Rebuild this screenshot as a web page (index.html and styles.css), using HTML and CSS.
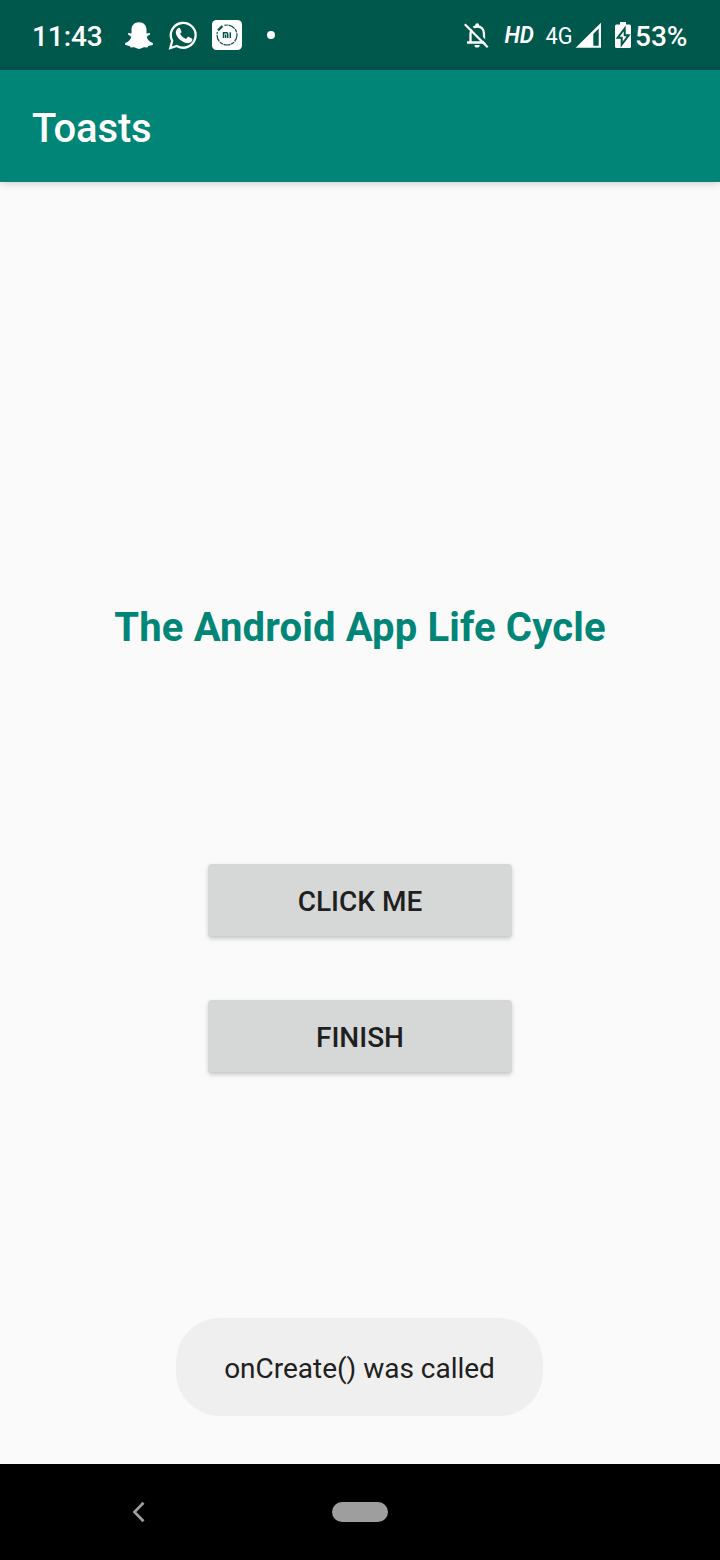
FILE: index.html
```html
<!DOCTYPE html>
<html lang="en">
<head>
<meta charset="utf-8">
<title>Toasts</title>
<link rel="stylesheet" href="styles.css">
</head>
<body>
<div class="screen">
  <header class="status">
    <span class="clock">11:43</span>
    <svg class="notifications" width="160" height="40" viewBox="120 15 160 40">
      <path fill="#fff" d="M139 22.300c-4.900 0-7.500 3.200-7.500 7.600v3.600l-3.200-.6-.5 1.400 3.500 2.400c-.6 2.800-2.700 5-6.200 6.400l.2 2 4.300 1 1 1.400 3.200-.2c1.800 0 2.500 1.600 5.200 1.600s3.400-1.600 5.200-1.600l3.200.2 1-1.400 4.300-1 .2-2c-3.500-1.400-5.600-3.600-6.200-6.400l3.500-2.400-.5-1.400-3.200.6v-3.600c0-4.400-2.600-7.600-7.500-7.600z"/>
      <path fill="none" stroke="#fff" stroke-width="2.300" d="M170.300 48l1.900-7a12.400 12.400 0 1 1 4.600 4.900z"/>
      <path fill="#fff" d="M178.300 27.900c.8-.5 1.500-.3 1.900.5l1.200 3c.2.700-.2 1.200-1.300 2.400 1.400 2.500 3.300 4.200 5.900 5.300l1.600-2c.4-.5.800-.4 1.400-.2l2.900 1.500c.6.400.5 1 .2 2.100-.8 2.200-3.500 3-5.700 2.500-5.300-1.300-9.500-5.200-10.500-9.500-.5-2.200.6-4.500 2.400-5.600z"/>
      <rect x="212" y="20" width="30" height="30" rx="4.500" fill="#fff"/>
      <circle cx="227" cy="35" r="10" fill="none" stroke="#00574b" stroke-width="1.200" stroke-dasharray="7 .8 3.500 .8"/>
      <path d="M216.500 31l6.500-6.500" stroke="#fff" stroke-width="5"/>
      <path d="M218 30.400l4.500-4.400" stroke="#00574b" stroke-width="2.200"/>
      <path d="M223.500 38v-5.200h3.200q1 0 1 1V38M225.600 34.500V38M230.300 32.200V38" fill="none" stroke="#00574b" stroke-width="1.500"/>
      <circle cx="271" cy="35" r="4" fill="#fff"/>
    </svg>
    <svg class="system" width="172" height="40" viewBox="460 15 172 40">
      <path d="M470.500 42.500V34c0-5 3-7.500 6.800-7.500s6.700 2.500 6.700 7.500v8.500M467 42.500h20" fill="none" stroke="#fff" stroke-width="2.300"/>
      <path d="M475.200 27v-1.700a2 2 0 0 1 4 0V27zM474.500 45h5.200a2.600 2.600 0 0 1-5.200 0z" fill="#fff"/>
      <path d="M466.500 22.300l23 23" stroke="#00574b" stroke-width="2.500"/>
      <path d="M464.800 24.300l22.900 22.900" stroke="#fff" stroke-width="2.300"/>
      <text class="hd" x="504.500" y="43.300" textLength="29.500" lengthAdjust="spacingAndGlyphs">HD</text>
      <text class="network" x="545.500" y="44" textLength="27" lengthAdjust="spacingAndGlyphs">4G</text>
      <path fill="#fff" fill-rule="evenodd" d="M575.700 47.800L601 22.800v25zM593.300 34v11.700h5.400V28.500z"/>
      <path fill="#fff" d="M620 22h6v2.500h3.500q1.500 0 1.500 1.500v20.500q0 1.500-1.500 1.500h-13q-1.500 0-1.500-1.500V26q0-1.500 1.500-1.500h3.500z"/>
      <path fill="#fff" stroke="#00574b" stroke-width="2" d="M624.700 28.500l-7 9.200h4v6.800l7-9.300h-4z"/>
    </svg>
    <span class="percent">53%</span>
  </header>
  <div class="toolbar">Toasts</div>
  <main class="content">
    <h1 class="title">The Android App Life Cycle</h1>
    <button class="button">CLICK ME</button>
    <button class="button">FINISH</button>
    <div class="toast">onCreate() was called</div>
  </main>
  <nav class="navigation">
    <svg class="back" width="16" height="24" viewBox="131 1500 16 24"><path d="M143.500 1502.700l-9 9.300 9 9.300" fill="none" stroke="#9e9e9e" stroke-width="2.700"/></svg>
    <span class="home"></span>
  </nav>
</div>
</body>
</html>
```
FILE: styles.css
```css
* { box-sizing: border-box; }
body { margin: 0; font-family: Roboto, sans-serif; background: #fafafa; }
.screen { display: flex; flex-direction: column; width: 720px; height: 1560px; }
.status { display: flex; align-items: center; height: 70px; padding-left: 32px; background: #00574b; color: #fff; font-size: 28px; font-weight: 500; }
.clock { width: 88px; padding-top: 3px; letter-spacing: -0.1px; }
.notifications, .system { flex: none; }
.system { margin-left: 180px; }
.percent { padding: 3px 0 0 3px; }
.hd { fill: #fff; font-size: 24px; font-weight: 600; font-style: italic; }
.network { fill: #fff; font-size: 24.5px; font-weight: 400; }
.toolbar { display: flex; align-items: center; position: relative; height: 112px; padding: 4px 32px 0; background: #008577; color: #fff; font-size: 40px; font-weight: 500; letter-spacing: -0.15px; box-shadow: 0 1px 8px rgba(0, 0, 0, .2); }
.content { display: flex; flex-direction: column; align-items: center; height: 1282px; padding-top: 422px; background: #fafafa; }
.title { height: 48px; margin: 0 0 212px; line-height: 48px; color: #008577; font-size: 40px; font-weight: 700; letter-spacing: 0.15px; white-space: nowrap; }
.button { width: 304px; height: 73px; margin: 0 0 63px; padding: 2px 0 0; border: 0; border-radius: 4px; background: #d6d8d7; color: #1f1f1f; font: 500 28px/34px Roboto, sans-serif; box-shadow: 0 2px 4px rgba(0, 0, 0, .18), inset 0 -1px 0 rgba(0, 0, 0, .04); }
.toast { width: 367px; height: 98px; margin: 182px 1px 0 0; padding-top: 2px; border-radius: 44px; background: #efefef; color: #202020; font-size: 28px; line-height: 98px; text-align: center; letter-spacing: -0.02px; }
.navigation { display: flex; align-items: center; height: 96px; padding-left: 131px; background: #000; }
.home { width: 56px; height: 20px; margin-left: 185px; border-radius: 10px; background: #9e9e9e; }
```
